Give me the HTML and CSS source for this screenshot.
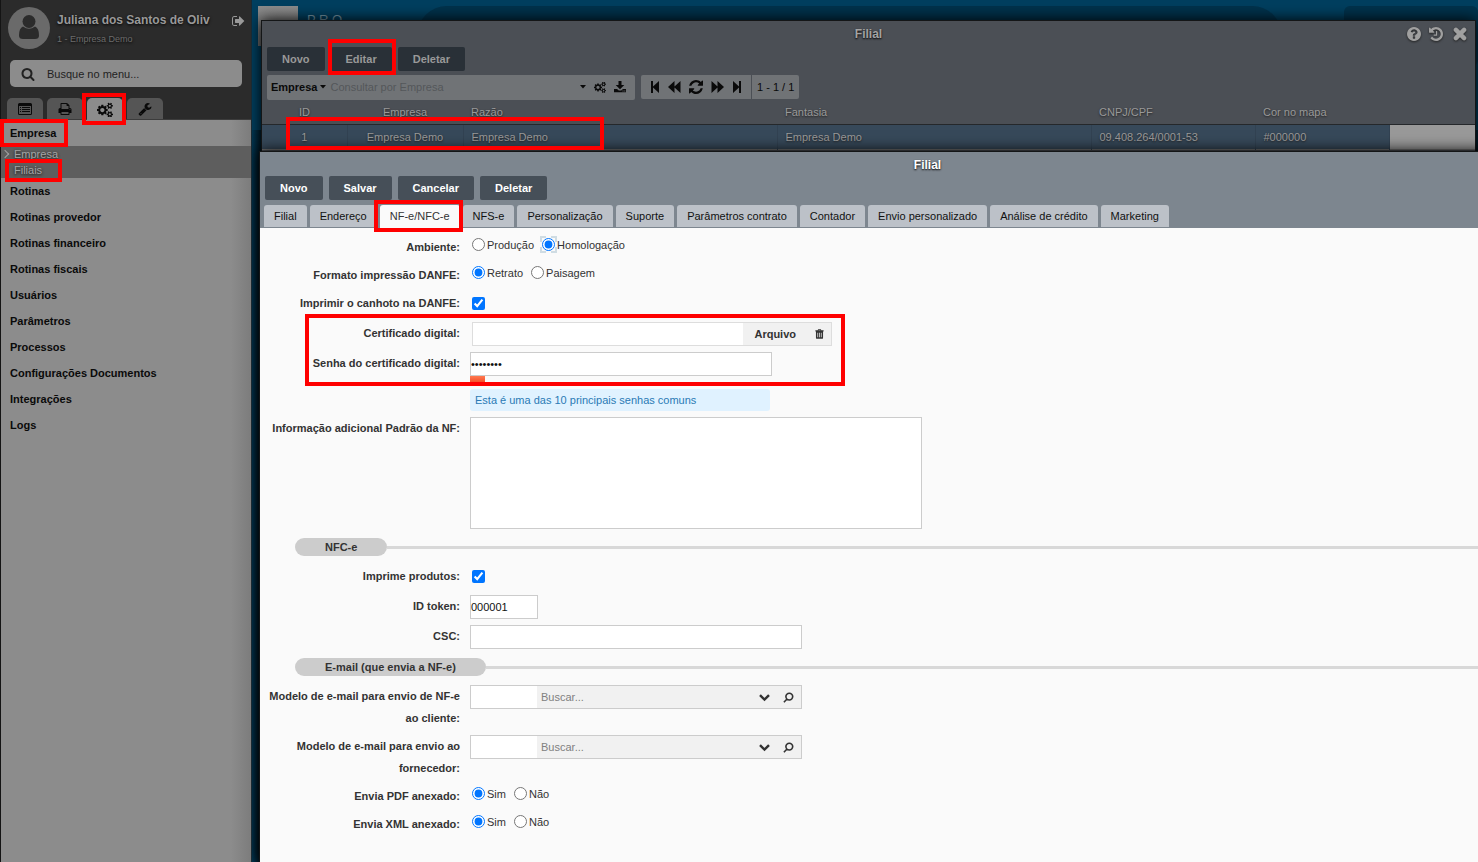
FILE: index.html
```html
<!DOCTYPE html>
<html lang="pt-BR">
<head>
<meta charset="utf-8">
<meta name="viewport" content="width=device-width, initial-scale=1">
<title>Filial</title>
<link rel="stylesheet" href="styles.css">
</head>
<body>
<svg class="sprite" aria-hidden="true">
  <symbol id="i-cogs" viewBox="0 0 1920 1792"><path d="M896 960q0-106-75-181t-181-75-181 75-75 181 75 181 181 75 181-75 75-181zm768 512q0-52-38-90t-90-38-90 38-38 90q0 53 37.5 90.5t90.5 37.5 90.5-37.5 37.5-90.5zm0-1024q0-52-38-90t-90-38-90 38-38 90q0 53 37.5 90.5t90.5 37.5 90.5-37.5 37.5-90.5zm-384 421v185q0 10-7 19.5t-16 10.500l-155 24q-11 35-32 76 34 48 90 115 7 11 7 20 0 12-7 19-23 30-82.500 89.500t-78.500 59.500q-11 0-21-7l-115-90q-37 19-77 31-11 108-23 155-7 24-30 24h-186q-11 0-20-7.500t-10-17.500l-23-153q-34-10-75-31l-118 89q-7 7-20 7-11 0-21-8-144-133-144-160 0-9 7-19 10-14 41-53t47-61q-23-44-35-82l-152-24q-10-1-17-9.500t-7-19.500v-185q0-10 7-19.500t16-10.500l155-24q11-35 32-76-34-48-90-115-7-11-7-20 0-12 7-20 22-30 82-89t79-59q11 0 21 7l115 90q34-18 77-32 11-108 23-154 7-24 30-24h186q11 0 20 7.500t10 17.500l23 153q34 10 75 31l118-89q8-7 20-7 11 0 21 8 144 133 144 160 0 8-7 19-12 16-42 54t-45 60q23 48 34 82l152 23q10 2 17 10.500t7 19.500zm640 533v140q0 16-149 31-12 27-30 52 51 113 51 138 0 4-4 7-122 71-124 71-8 0-46-47t-52-68q-20 2-30 2t-30-2q-14 21-52 68t-46 47q-2 0-124-71-4-3-4-7 0-25 51-138-18-25-30-52-149-15-149-31v-140q0-16 149-31 13-29 30-52-51-113-51-138 0-4 4-7 4-2 35-20t59-34 30-16q8 0 46 46.500t52 67.500q20-2 30-2t30 2q51-71 92-112l6-2q4 0 124 70 4 3 4 7 0 25-51 138 17 23 30 52 149 15 149 31zm0-1024v140q0 16-149 31-12 27-30 52 51 113 51 138 0 4-4 7-122 71-124 71-8 0-46-47t-52-68q-20 2-30 2t-30-2q-14 21-52 68t-46 47q-2 0-124-71-4-3-4-7 0-25 51-138-18-25-30-52-149-15-149-31v-140q0-16 149-31 13-29 30-52-51-113-51-138 0-4 4-7 4-2 35-20t59-34 30-16q8 0 46 46.500t52 67.500q20-2 30-2t30 2q51-71 92-112l6-2q4 0 124 70 4 3 4 7 0 25-51 138 17 23 30 52 149 15 149 31z"/></symbol>
  <symbol id="i-print" viewBox="0 0 1792 1792"><path d="M448 1536h896v-256h-896v256zm0-640h896v-384h-160q-40 0-68-28t-28-68v-160h-640v640zm1152 64q0-26-19-45t-45-19-45 19-19 45 19 45 45 19 45-19 19-45zm128 0v416q0 13-9.500 22.500t-22.500 9.500h-224v160q0 40-28 68t-68 28h-960q-40 0-68-28t-28-68v-160h-224q-13 0-22.500-9.500t-9.500-22.500v-416q0-79 56.500-135.500t135.500-56.500h64v-544q0-40 28-68t68-28h672q40 0 88 20t76 48l152 152q28 28 48 76t20 88v256h64q79 0 135.500 56.500t56.500 135.500z"/></symbol>
  <symbol id="i-search" viewBox="0 0 1792 1792"><path d="M1216 832q0-185-131.500-316.500t-316.500-131.500-316.500 131.500-131.500 316.500 131.500 316.500 316.500 131.500 316.500-131.500 131.500-316.500zm512 832q0 52-38 90t-90 38q-54 0-90-38l-343-342q-179 124-399 124-143 0-273.500-55.500t-225-150-150-225-55.500-273.500 55.500-273.500 150-225 225-150 273.500-55.500 273.500 55.500 225 150 150 225 55.500 273.500q0 220-124 399l343 343q37 37 37 90z"/></symbol>
  <symbol id="i-wrench" viewBox="0 0 1792 1792"><path d="M448 1472q0-26-19-45t-45-19-45 19-19 45 19 45 45 19 45-19 19-45zm644-420l-682 682q-37 37-90 37-52 0-91-37l-106-108q-38-36-38-90 0-53 38-91l681-681q39 98 114.500 173.500t173.500 114.500zm634-435q0 39-23 106-47 134-164.500 217.500t-258.500 83.500q-185 0-316.500-131.500t-131.500-316.500 131.500-316.500 316.500-131.500q58 0 121.500 16.500t107.500 46.500q16 11 16 28t-16 28l-293 169v224l193 107q5-3 79-48.500t135.500-81 70.500-35.500q15 0 23.500 10t8.500 25z"/></symbol>
  <symbol id="i-out" viewBox="0 0 1664 1792"><path d="M704 1440q0 4 1 20t.5 26.500-3 23.500-10 19.500-20.500 6.500h-320q-119 0-203.500-84.500t-84.500-203.500v-704q0-119 84.500-203.500t203.500-84.500h320q13 0 22.500 9.500t9.500 22.500q0 4 1 20t.5 26.500-3 23.500-10 19.500-20.500 6.500h-320q-66 0-113 47t-47 113v704q0 66 47 113t113 47h312l11.500 1 11.500 3 8 5.500 7 9 2 13.500zm928-544q0 26-19 45l-544 544q-19 19-45 19t-45-19-19-45v-288h-448q-26 0-45-19t-19-45v-384q0-26 19-45t45-19h448v-288q0-26 19-45t45-19 45 19l544 544q19 19 19 45z"/></symbol>
  <symbol id="i-list" viewBox="0 0 14 12"><path fill-rule="evenodd" d="M1.500 0h11A1.500 1.500 0 0 1 14 1.500v9a1.500 1.500 0 0 1-1.500 1.500h-11A1.500 1.500 0 0 1 0 10.500v-9A1.500 1.500 0 0 1 1.500 0zM1 3v7.500a.5.5 0 0 0 .5.5h11a.5.5 0 0 0 .5-.5V3zM2 4h1v1H2zM4 4h8v1H4zM2 6h1v1H2zM4 6h8v1H4zM2 8h1v1H2zM4 8h8v1H4z"/></symbol>
  <symbol id="i-download" viewBox="0 0 12 12"><path fill-rule="evenodd" d="M4.500 0h3v4h2.800L6 8.300 1.700 4h2.800zM0 8h3l1.800 1.600h2.400L9 8h3v3.200H0zM8.500 9.500h1v1h-1zM10.300 9.500h1v1h-1z"/></symbol>
  <symbol id="i-first" viewBox="0 0 10 12"><path d="M1 0h2v5.500L9 0v12L3 6.500V12H1z"/></symbol>
  <symbol id="i-last" viewBox="0 0 10 12"><path d="M9 0H7v5.500L1 0v12l6-5.500V12h2z"/></symbol>
  <symbol id="i-back" viewBox="0 0 13 12"><path d="M6.500 0v5.500L12.500 0v12l-6-5.500V12L0 6z"/></symbol>
  <symbol id="i-fwd" viewBox="0 0 13 12"><path d="M6.500 0v5.500L.5 0v12l6-5.500V12L13 6z"/></symbol>
  <symbol id="i-refresh" viewBox="128 128 1536 1536"><path d="M1639 1056q0 5-1 7-64 268-268 434.500t-478 166.500q-146 0-282.500-55t-243.500-157l-129 129q-19 19-45 19t-45-19-19-45v-448q0-26 19-45t45-19h448q26 0 45 19t19 45-19 45l-137 137q71 66 161 102t187 36q134 0 250-65t186-179q11-17 53-117 8-23 30-23h192q13 0 22.500 9.500t9.500 22.500zm25-800v448q0 26-19 45t-45 19h-448q-26 0-45-19t-19-45 19-45l138-138q-148-137-349-137-134 0-250 65t-186 179q-11 17-53 117-8 23-30 23h-199q-13 0-22.500-9.500t-9.500-22.500v-7q65-268 270-434.500t480-166.500q146 0 284 55.500t245 156.500l130-129q19-19 45-19t45 19 19 45z"/></symbol>
  <symbol id="i-history" viewBox="128 128 1536 1536"><path d="M1664 896q0 156-61 298t-164 245-245 164-298 61q-172 0-327-72.500t-264-204.500q-7-10-6.500-22.500t8.500-20.500l137-138q10-9 25-9 16 2 23 12 73 95 179 147t225 52q104 0 198.500-40.500t163.500-109.500 109.500-163.500 40.500-198.500-40.500-198.500-109.500-163.500-163.500-109.500-198.500-40.500q-98 0-188 35.500t-160 101.500l137 138q31 30 14 69-17 40-59 40h-448q-26 0-45-19t-19-45v-448q0-42 40-59 39-17 69 14l130 129q107-101 244.500-156.500t284.500-55.500q156 0 298 61t245 164 164 245 61 298zm-640-288v448q0 14-9 23t-23 9h-320q-14 0-23-9t-9-23v-64q0-14 9-23t23-9h224v-352q0-14 9-23t23-9h64q14 0 23 9t9 23z"/></symbol>
  <symbol id="i-help" viewBox="128 128 1536 1536"><path d="M1024 1376v-192q0-14-9-23t-23-9h-192q-14 0-23 9t-9 23v192q0 14 9 23t23 9h192q14 0 23-9t9-23zm256-672q0-88-55.500-163t-138.500-116-170-41q-243 0-371 213-15 24 8 42l132 100q7 6 19 6 16 0 25-12 53-68 86-92 34-24 86-24 48 0 85.500 26t37.500 59q0 38-20 61t-68 45q-63 28-115.500 86.500t-52.500 125.500v36q0 14 9 23t23 9h192q14 0 23-9t9-23q0-19 21.500-49.500t54.500-49.500q32-18 49-28.500t46-35 44.500-48 28-60.500 12.500-81zm384 192q0 209-103 385.500t-279.500 279.500-385.500 103-385.500-103-279.500-279.500-103-385.500 103-385.500 279.500-279.500 385.500-103 385.500 103 279.500 279.500 103 385.500z"/></symbol>
  <symbol id="i-times" viewBox="0 0 12 12"><path d="M2.500 2.500l7 7M9.500 2.500l-7 7" fill="none" stroke="currentColor" stroke-width="3.800" stroke-linecap="round"/></symbol>
  <symbol id="i-trash" viewBox="0 0 10 11"><path fill-rule="evenodd" d="M3 1.400L3.500.2h3L7 1.400h2.500v1.300h-.6V9.500Q8.900 10.800 7.800 10.800H2.200Q1.100 10.800 1.100 9.500V2.700H.5V1.400zM3.900 1.400h2.200L6 1H4zM2.700 4v5h.8V4zM4.600 4v5h.8V4zM6.500 4v5h.8V4z"/></symbol>
  <symbol id="i-caret" viewBox="0 0 6 4"><path d="M0 0h6L3 3.500z"/></symbol>
  <symbol id="i-chevron" viewBox="0 0 10 8"><path d="M.9 1.800L5 5.900l4.100-4.100" fill="none" stroke="currentColor" stroke-width="2.200"/></symbol>
  <symbol id="i-lens" viewBox="0 0 11 11"><path d="M6.300 1.200a3.400 3.400 0 1 1 0 6.800 3.400 3.400 0 0 1 0-6.800zM4 7L.9 10.200" fill="none" stroke="currentColor" stroke-width="1.600"/></symbol>
</svg>

<aside class="sidebar">
  <header class="profile">
    <svg class="avatar" viewBox="0 0 42 42" aria-hidden="true"><circle cx="21" cy="21" r="21" fill="#6a6a6a"/><circle cx="21" cy="14.500" r="6.500" fill="#2b2b2b"/><path fill="#2b2b2b" d="M15 19.500q6 4.500 12 0 4 1.500 4 9 0 3.500-4 3.500H15q-4 0-4-3.500 0-7.500 4-9z"/></svg>
    <div class="person">
      <strong>Juliana dos Santos de Oliv</strong>
      <small>1 - Empresa Demo</small>
    </div>
    <button class="icon-button" aria-label="Sair"><svg class="icon"><use href="#i-out"/></svg></button>
  </header>
  <label class="menu-search">
    <svg class="icon"><use href="#i-search"/></svg>
    <input type="text" placeholder="Busque no menu..." aria-label="Busque no menu">
  </label>
  <div class="menu-tabs">
    <button aria-label="Cadastros"><svg class="icon"><use href="#i-list"/></svg></button>
    <button aria-label="Relatórios"><svg class="icon"><use href="#i-print"/></svg></button>
    <button class="current" aria-label="Sistema"><svg class="icon cogs"><use href="#i-cogs"/></svg><span class="mark mark-system"></span></button>
    <button aria-label="Ferramentas"><svg class="icon"><use href="#i-wrench"/></svg></button>
  </div>
  <nav class="menu">
    <a class="item open" href="#">Empresa<span class="mark mark-company"></span></a>
    <div class="submenu">
      <a class="expandable" href="#">Empresa</a>
      <a href="#">Filiais<span class="mark mark-branches"></span></a>
    </div>
    <a class="item" href="#">Rotinas</a>
    <a class="item" href="#">Rotinas provedor</a>
    <a class="item" href="#">Rotinas financeiro</a>
    <a class="item" href="#">Rotinas fiscais</a>
    <a class="item" href="#">Usuários</a>
    <a class="item" href="#">Parâmetros</a>
    <a class="item" href="#">Processos</a>
    <a class="item" href="#">Configurações Documentos</a>
    <a class="item" href="#">Integrações</a>
    <a class="item" href="#">Logs</a>
  </nav>
</aside>

<main class="desktop">
  <div class="topbar">
    <div class="logo"></div>
    <span class="brand">P R O —</span>
    <div class="top-pill"></div>
    <div class="top-box"></div>
  </div>

  <section class="window list-window">
    <header class="window-title">
      <h2>Filial</h2>
      <div class="window-controls">
        <button class="icon-button" aria-label="Ajuda"><svg class="icon"><use href="#i-help"/></svg></button>
        <button class="icon-button" aria-label="Histórico"><svg class="icon"><use href="#i-history"/></svg></button>
        <button class="icon-button" aria-label="Fechar"><svg class="icon"><use href="#i-times"/></svg></button>
      </div>
    </header>
    <div class="actions">
      <button>Novo</button>
      <button>Editar<span class="mark mark-edit"></span></button>
      <button>Deletar</button>
    </div>
    <div class="tools">
      <div class="query">
        <button class="field-name">Empresa <svg class="caret"><use href="#i-caret"/></svg></button>
        <input type="text" placeholder="Consultar por Empresa" aria-label="Consultar por Empresa">
        <button aria-label="Opções"><svg class="caret"><use href="#i-caret"/></svg></button>
        <button aria-label="Configurar"><svg class="icon"><use href="#i-cogs"/></svg></button>
        <button aria-label="Exportar"><svg class="icon"><use href="#i-download"/></svg></button>
      </div>
      <div class="pager">
        <div class="pager-buttons">
          <button aria-label="Primeira"><svg class="narrow"><use href="#i-first"/></svg></button>
          <button aria-label="Anterior"><svg><use href="#i-back"/></svg></button>
          <button aria-label="Atualizar"><svg class="large"><use href="#i-refresh"/></svg></button>
          <button aria-label="Próxima"><svg><use href="#i-fwd"/></svg></button>
          <button aria-label="Última"><svg class="narrow"><use href="#i-last"/></svg></button>
        </div>
        <span>1 - 1 / 1</span>
      </div>
    </div>
    <table class="grid">
      <colgroup><col class="c-id"><col class="c-company"><col class="c-name"><col class="c-name"><col class="c-doc"><col class="c-color"><col></colgroup>
      <thead><tr><th>ID</th><th>Empresa</th><th>Razão</th><th>Fantasia</th><th>CNPJ/CPF</th><th>Cor no mapa</th><th></th></tr></thead>
      <tbody><tr><td>1<span class="mark mark-row"></span></td><td>Empresa Demo</td><td>Empresa Demo</td><td>Empresa Demo</td><td>09.408.264/0001-53</td><td>#000000</td><td class="rest"></td></tr></tbody>
    </table>
  </section>

  <section class="window form-window">
    <header class="window-title"><h2>Filial</h2></header>
    <div class="actions">
      <button>Novo</button>
      <button>Salvar</button>
      <button>Cancelar</button>
      <button>Deletar</button>
    </div>
    <div class="tabs" role="tablist">
      <button role="tab">Filial</button>
      <button role="tab">Endereço</button>
      <button role="tab" class="current" aria-selected="true">NF-e/NFC-e<span class="mark mark-tab"></span></button>
      <button role="tab">NFS-e</button>
      <button role="tab">Personalização</button>
      <button role="tab">Suporte</button>
      <button role="tab">Parâmetros contrato</button>
      <button role="tab">Contador</button>
      <button role="tab">Envio personalizado</button>
      <button role="tab">Análise de crédito</button>
      <button role="tab">Marketing</button>
    </div>
    <form class="form">
      <div class="row" role="radiogroup" aria-labelledby="l-env">
        <span class="label" id="l-env">Ambiente:</span>
        <div class="choices">
          <label><input type="radio" name="env">Produção</label>
          <label><input type="radio" name="env" class="focused" checked>Homologação</label>
        </div>
      </div>
      <div class="row" role="radiogroup" aria-labelledby="l-fmt">
        <span class="label" id="l-fmt">Formato impressão DANFE:</span>
        <div class="choices">
          <label><input type="radio" name="fmt" checked>Retrato</label>
          <label><input type="radio" name="fmt">Paisagem</label>
        </div>
      </div>
      <div class="row">
        <label class="label" for="stub">Imprimir o canhoto na DANFE:</label>
        <div class="check"><input type="checkbox" id="stub" checked></div>
      </div>
      <div class="certificate">
        <div class="row">
          <label class="label" for="cert">Certificado digital:</label>
          <div class="file">
            <input type="text" id="cert">
            <button type="button">Arquivo</button>
            <button type="button" aria-label="Remover"><svg class="icon"><use href="#i-trash"/></svg></button>
          </div>
        </div>
        <div class="row">
          <label class="label" for="pass">Senha do certificado digital:</label>
          <div>
            <input class="box w-password" type="password" id="pass" value="12345678">
            <div class="strength"></div>
          </div>
        </div>
        <span class="mark mark-certificate"></span>
      </div>
      <div class="row">
        <span></span>
        <p class="hint">Esta é uma das 10 principais senhas comuns</p>
      </div>
      <div class="row">
        <label class="label" for="info">Informação adicional Padrão da NF:</label>
        <textarea class="box" id="info"></textarea>
      </div>
      <h3 class="section"><span>NFC-e</span></h3>
      <div class="row">
        <label class="label" for="prod">Imprime produtos:</label>
        <div class="check"><input type="checkbox" id="prod" checked></div>
      </div>
      <div class="row">
        <label class="label" for="token">ID token:</label>
        <input class="box w-token" type="text" id="token" value="000001">
      </div>
      <div class="row">
        <label class="label" for="csc">CSC:</label>
        <input class="box w-wide" type="text" id="csc">
      </div>
      <h3 class="section"><span>E-mail (que envia a NF-e)</span></h3>
      <div class="row">
        <label class="label" for="m1">Modelo de e-mail para envio de NF-e ao cliente:</label>
        <div class="lookup w-wide">
          <input class="code" type="text" id="m1">
          <input class="find" type="text" placeholder="Buscar..." aria-label="Buscar modelo para cliente">
          <button type="button" aria-label="Abrir lista"><svg><use href="#i-chevron"/></svg></button>
          <button type="button" aria-label="Pesquisar"><svg><use href="#i-lens"/></svg></button>
        </div>
      </div>
      <div class="row">
        <label class="label" for="m2">Modelo de e-mail para envio ao fornecedor:</label>
        <div class="lookup w-wide">
          <input class="code" type="text" id="m2">
          <input class="find" type="text" placeholder="Buscar..." aria-label="Buscar modelo para fornecedor">
          <button type="button" aria-label="Abrir lista"><svg><use href="#i-chevron"/></svg></button>
          <button type="button" aria-label="Pesquisar"><svg><use href="#i-lens"/></svg></button>
        </div>
      </div>
      <div class="row" role="radiogroup" aria-labelledby="l-pdf">
        <span class="label" id="l-pdf">Envia PDF anexado:</span>
        <div class="choices">
          <label><input type="radio" name="pdf" checked>Sim</label>
          <label><input type="radio" name="pdf">Não</label>
        </div>
      </div>
      <div class="row" role="radiogroup" aria-labelledby="l-xml">
        <span class="label" id="l-xml">Envia XML anexado:</span>
        <div class="choices">
          <label><input type="radio" name="xml" checked>Sim</label>
          <label><input type="radio" name="xml">Não</label>
        </div>
      </div>
    </form>
  </section>
</main>
</body>
</html>
```

FILE: styles.css
```css
* { box-sizing: border-box; }
body {
  margin: 0;
  min-height: 100vh;
  display: flex;
  overflow: hidden;
  background: #003a58;
  font: 11px/16px "Liberation Sans", Arial, sans-serif;
  color: #333;
}
button, input, textarea { font: inherit; color: inherit; margin: 0; }
button { padding: 0; border: 0; background: none; }
input[type="text"], input[type="password"] { min-width: 0; border: 0; outline: 0; }
a { color: inherit; text-decoration: none; }
h2, h3, p { margin: 0; font-size: 11px; }
svg { display: block; fill: currentColor; }
.sprite { display: none; }
.icon { width: 14px; height: 14px; }
.caret { width: 6px; height: 4px; }

/* callout frames drawn over controls */
.mark {
  position: absolute;
  border: 4px solid #f00;
  z-index: 5;
  pointer-events: none;
}
.mark-system { inset: -5px -3px -5px -5px; }
.mark-company { left: -1px; top: -1px; width: 68px; bottom: -1px; }
.mark-branches { left: 4px; top: -3px; width: 57px; bottom: -4px; }
.mark-edit { inset: -8px -4px -4px -3px; }
.mark-row { left: 24px; top: -8px; width: 318px; height: 33px; }
.mark-tab { inset: -5px -3px -4px -6px; }
.mark-certificate { left: 45px; top: -8px; width: 540px; height: 72px; }

/* sidebar */
.sidebar {
  flex: 0 0 252px;
  display: flex;
  flex-direction: column;
  min-height: 100vh;
  border-left: 1px solid #141414;
  border-right: 1px solid #1a2a33;
  background: #2b2b2b;
}
.profile {
  display: flex;
  align-items: flex-start;
  gap: 7px;
  padding: 7px 6px 0 7px;
  color: #999;
}
.avatar { width: 42px; height: 42px; }
.person { flex: 1; display: flex; flex-direction: column; gap: 4px; padding-top: 5px; white-space: nowrap; text-shadow: 0 1px 3px #000; }
.person strong { font-size: 12px; line-height: 16px; }
.person small { font-size: 9px; line-height: 14px; color: #6c6c6c; }
.profile .icon-button { padding-top: 7px; }
.menu-search {
  display: flex;
  align-items: center;
  gap: 12px;
  height: 27px;
  margin: 11px 9px;
  padding: 0 11px;
  border-radius: 5px;
  background: #8c8c8c;
  color: #222;
}
.menu-search input { flex: 1; background: none; padding: 0; }
.menu-search ::placeholder { color: #1f1f1f; opacity: 1; }
.menu-tabs { display: flex; gap: 4px; padding: 0 6px; border-bottom: 1px solid #3c3c3c; }
.menu-tabs button {
  position: relative;
  display: grid;
  place-items: center;
  width: 36px;
  height: 21px;
  border-radius: 5px 5px 0 0;
  background: #555;
  color: #0a0a0a;
}
.menu-tabs .current { height: 22px; margin-bottom: -1px; background: #8c8c8c; }
.menu-tabs .cogs { width: 16px; height: 15px; }
.menu { flex: 1; background: linear-gradient(90deg, #8c8c8c 92%, #7c7c7c); }
.item { position: relative; display: block; padding: 0 9px; line-height: 26px; font-weight: 700; color: #0a0a0a; }
.submenu { background: #5e5e5e; color: #a4a4a4; text-shadow: 0 1px 3px #111; }
.submenu a { position: relative; display: block; padding-left: 13px; line-height: 16px; }
.submenu .expandable::before {
  content: "";
  position: absolute;
  left: 1px;
  top: 5px;
  width: 5px;
  height: 5px;
  border: solid #a4a4a4;
  border-width: 1px 1px 0 0;
  transform: rotate(45deg);
}

/* desktop and its windows */
.desktop { position: relative; flex: 1; min-width: 0; overflow: hidden; background: linear-gradient(90deg, #003a58, #002335 8px); }
.topbar { display: flex; height: 130px; padding: 6px 0 0 6px; background: #003f5f; align-items: flex-start; }
.logo { width: 40px; height: 40px; background: linear-gradient(#8c8c8c, #6c6c6c); }
.brand { padding: 6px 0 0 9px; width: 119px; font-size: 13px; line-height: 16px; color: #7494a3; }
.top-pill { flex: 0 1 865px; height: 60px; border-radius: 30px; background: #00324c; }
.top-box { flex: 1; height: 60px; margin-left: 62px; border-radius: 6px; background: #00324c; }
.window { position: absolute; border: 1px solid #141617; box-shadow: 0 0 14px #000; }
.list-window { left: 9px; right: 2px; top: 20px; bottom: 0; background: #4b4f55; color: #999; }
.form-window { left: 7px; right: -118px; top: 151px; bottom: -1px; background: #fafafa; }
.window-title { position: relative; height: 26px; text-align: center; line-height: 26px; }
.window-title h2 { font-size: 12px; color: #a3a3a3; text-shadow: 0 1px 2px #000; }
.form-window .window-title { height: 24px; background: #7d868f; }
.form-window .window-title h2 { color: #fff; }
.window-controls { position: absolute; right: 8px; top: 6px; display: flex; gap: 8px; color: #a0a0a0; }
.icon-button { display: block; }
.window-controls .icon { filter: drop-shadow(0 1px 1px #222); }
.window-controls .icon-button:last-child { padding-left: 2px; }
.actions { display: flex; gap: 6px; padding: 0 5px; }
.actions button { position: relative; height: 24px; padding: 0 15px; border-radius: 2px; background: #293037; color: #999; font-weight: 700; }
.form-window .actions { background: #7d868f; }
.form-window .actions button { background: #464f58; color: #fff; }
.tools { display: flex; gap: 6px; align-items: flex-start; padding: 4px 5px 0; color: #0a0a0a; }
.query, .pager { display: flex; background: #707376; border-radius: 2px; }
.query { align-items: center; width: 368px; height: 25px; padding: 0 9px 1px 4px; gap: 8px; }
.query .icon { width: 12px; height: 12px; }
.query .field-name { display: flex; align-items: center; gap: 3px; font-weight: 700; }
.query input { flex: 1; padding: 0; margin-left: -4px; background: none; }
.query ::placeholder { color: #54575a; opacity: 1; }
.pager { height: 24px; align-items: stretch; }
.pager span { padding: 0 5px; line-height: 24px; border-left: 1px solid #4b4f55; }
.pager-buttons { display: flex; align-items: center; gap: 8px; padding: 0 9px; }
.pager svg { width: 13px; height: 12px; }
.pager svg.narrow { width: 10px; }
.pager svg.large { width: 14px; height: 14px; }
.grid { width: 100%; border-collapse: collapse; table-layout: fixed; }
.c-id { width: 85px; }
.c-company { width: 116px; }
.c-name { width: 314px; }
.c-doc { width: 164px; }
.c-color { width: 134px; }
.grid th, .grid td { height: 24px; padding: 0 8px; text-align: left; font-weight: 400; white-space: nowrap; line-height: 16px; text-shadow: 0 1px 2px #222; }
.grid td { height: 25px; padding-top: 1px; }
.grid th { border-bottom: 1px solid #25282b; }
.grid th:nth-child(-n+2), .grid td:nth-child(-n+2) { text-align: center; }
.grid td { position: relative; background: #37495a; border-right: 1px solid #324252; }
.grid .rest { background: #999; border: 0; }
.grid tbody { border-bottom: 1px solid #777; }

.tabs { display: flex; gap: 3px; padding: 5px 4px 0; background: #7d868f; }
.tabs button { position: relative; height: 22px; margin-bottom: 1px; padding: 0 10px; border-radius: 3px 3px 0 0; background: #bcc1c8; color: #111; white-space: nowrap; }
.tabs .current { height: 23px; margin-bottom: 0; padding-bottom: 1px; background: #fafafa; color: #333; }

/* form */
.form { padding-top: 8px; }
.row { display: grid; grid-template-columns: 200px 1fr; column-gap: 10px; align-items: start; margin-bottom: 6px; }
.label { text-align: right; font-weight: 700; line-height: 22px; }
.choices { display: flex; gap: 8px; padding-left: 2px; }
.choices label { display: flex; align-items: center; gap: 2px; height: 18px; }
.choices input { margin-bottom: 2px; }
input[type="radio"], input[type="checkbox"] { width: 13px; height: 13px; accent-color: #0075ff; }
.focused { outline: 2px dashed #cfdce3; outline-offset: 0; }
.check { display: flex; align-items: center; height: 24px; padding: 0 0 1px 2px; }
.form .box { display: block; height: 24px; padding: 0; border: 1px solid #ccc; border-radius: 0; background: #fff; color: #111; }
.form textarea.box { width: 452px; height: 112px; resize: none; }
.w-password { width: 302px; }
.w-token { width: 68px; }
.w-wide { width: 332px; }
.certificate { position: relative; }
.file { display: flex; width: 360px; height: 24px; margin-left: 2px; border: 1px solid #ddd; background: #f1f1f1; }
.file input { flex: 1; background: #fff; }
.file button { display: grid; place-items: center; padding: 0 12px 0 11px; font-weight: 700; }
.file button + button { padding: 0 6px; }
.file .icon { width: 11px; height: 10px; }
.strength { width: 15px; height: 6px; background: linear-gradient(#ff7a50, #f5512c); }
.hint { width: 300px; padding: 0 5px; margin-top: 1px; border-radius: 3px; line-height: 22px; background: #e0f2ff; color: #2a7ab5; }
.section { display: flex; align-items: center; margin: 9px 0 9px 35px; }
.section span { padding: 0 30px; border-radius: 9px; line-height: 18px; background: #ccc; }
.section::after { content: ""; flex: 1; height: 3px; background: #d8d8d8; }
.lookup { display: flex; height: 24px; padding-right: 1px; border: 1px solid #ccc; background: #f1f1f1; }
.lookup .code { width: 66px; padding: 0; background: #fff; }
.lookup .find { flex: 1; padding: 0 4px; background: none; }
.lookup ::placeholder { color: #808080; opacity: 1; }
.lookup button { display: grid; place-items: center; width: 24px; }
.lookup svg { width: 11px; height: 11px; }
```
